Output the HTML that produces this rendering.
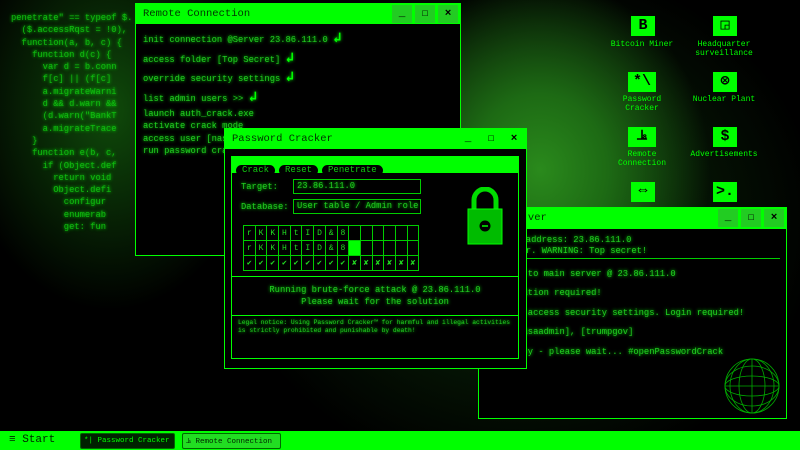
<!DOCTYPE html>
<html><head><style>
*{margin:0;padding:0;box-sizing:border-box}
body{width:800px;height:450px;overflow:hidden;background:#000;font-family:"Liberation Mono",monospace;color:#1d1;position:relative}
.bg{position:absolute;inset:0;background:
radial-gradient(ellipse 170px 190px at 540px 170px,#2a8a1c 0%,#1d6a14 40%,rgba(0,0,0,0) 100%),
radial-gradient(ellipse 150px 200px at 110px 110px,#0f4a0a 0%,rgba(0,0,0,0) 100%),
radial-gradient(ellipse 300px 260px at 520px 220px,#0c300a 0%,#000 100%);}
.code{position:absolute;left:11px;top:12px;font-size:8.8px;line-height:12.3px;color:#1b1;white-space:pre;text-shadow:0 0 3px #0f0}
.win{position:absolute;background:#000;border:1px solid #0f0}
.tb{background:#0f0;color:#030;height:20px;font-size:10.5px;padding:4px 7px;position:relative}
.btns{position:absolute;right:2px;top:1px;display:flex;gap:3px}
.btns span{width:20px;height:18px;background:#2c2;color:#000;font-size:11px;text-align:center;line-height:18px;font-weight:bold}
.t{font-size:8.8px;color:#2c2;text-shadow:0 0 3px #0f0;white-space:pre}
.ic{position:absolute;width:24px;height:20px;background:#0f0;color:#000;font-weight:bold;text-align:center;font-size:15px;line-height:20px}
.il{position:absolute;font-size:8px;color:#0f0;text-align:center;width:90px;line-height:9px}
.grid td{width:11.7px;height:15px;border:1px solid #0c0;font-size:8px;text-align:center;color:#2d2}
.grid{border-collapse:collapse;position:absolute}
.pill{display:inline-block;background:#000;color:#1c1;border-radius:6px;font-size:9px;padding:0 6px;height:11px;line-height:11px;margin-left:4px}
.ar{color:#0f0;font-size:14px;font-weight:bold}
</style></head><body>
<div class="bg"></div>
<div class="code">penetrate" == typeof $.
  ($.accessRqst = !0),
  function(a, b, c) {
    function d(c) {
      var d = b.conn
      f[c] || (f[c]
      a.migrateWarni
      d &amp;&amp; d.warn &amp;&amp;
      (d.warn("BankT
      a.migrateTrace
    }
    function e(b, c,
      if (Object.def
        return void
        Object.defi
          configur
          enumerab
          get: fun</div>

<div class="ic" style="left:631px;top:16px">B</div><div class="il" style="left:597px;top:40px">Bitcoin Miner</div>
<div class="ic" style="left:713px;top:16px">◲</div><div class="il" style="left:679px;top:40px">Headquarter<br>surveillance</div>
<div class="ic" style="left:628px;top:72px;width:28px">*\</div><div class="il" style="left:597px;top:95px">Password<br>Cracker</div>
<div class="ic" style="left:713px;top:72px">⊗</div><div class="il" style="left:679px;top:95px">Nuclear Plant</div>
<div class="ic" style="left:628px;top:127px;width:28px">⫡</div><div class="il" style="left:597px;top:150px">Remote<br>Connection</div>
<div class="ic" style="left:713px;top:127px">$</div><div class="il" style="left:679px;top:150px">Advertisements</div>
<div class="ic" style="left:631px;top:182px">⇔</div>
<div class="ic" style="left:713px;top:182px">&gt;.</div>

<div class="win" style="left:135px;top:3px;width:326px;height:253px">
<div class="tb">Remote Connection<div class="btns"><span>_</span><span>☐</span><span>×</span></div></div>
<div style="position:absolute;left:7px;top:26px;line-height:18.7px" class="t">init connection @Server 23.86.111.0 <span class="ar">↲</span>
access folder [Top Secret] <span class="ar">↲</span>
override security settings <span class="ar">↲</span>
list admin users &gt;&gt; <span class="ar">↲</span></div>
<div style="position:absolute;left:7px;top:104px;line-height:12.4px" class="t">launch auth_crack.exe
activate crack mode
access user [nasa
run password cra</div>
</div>

<div class="win" style="left:478px;top:207px;width:309px;height:212px">
<div class="tb" style="height:21px;padding-left:30px">Server<div class="btns"><span>_</span><span>☐</span><span>×</span></div></div>
<div class="t" style="position:absolute;left:-6px;top:27px;line-height:11px">Server IP address: 23.86.111.0
Main server. WARNING: Top secret!</div>
<div style="position:absolute;left:0;right:6px;top:50px;border-top:1px solid #0c0"></div>
<div class="t" style="position:absolute;left:-4px;top:57px;line-height:19.4px">Connected to main server @ 23.86.111.0
Authentication required!
Trying to access security settings. Login required!
Users: [nasaadmin], [trumpgov]
Server busy - please wait... #openPasswordCrack</div>
<svg style="position:absolute;left:245px;top:150px" width="56" height="56" viewBox="0 0 56 56"><g fill="none" stroke="#0a0" stroke-width=".8"><circle cx="28" cy="28" r="27"/><ellipse cx="28" cy="28" rx="13" ry="27"/><ellipse cx="28" cy="28" rx="22" ry="27"/><ellipse cx="28" cy="28" rx="27" ry="10"/><ellipse cx="28" cy="28" rx="27" ry="20"/><line x1="1" y1="28" x2="55" y2="28"/><line x1="28" y1="1" x2="28" y2="55"/></g></svg>
</div>

<div class="win" style="left:224px;top:128px;width:303px;height:241px;border-color:#0f0">
<div class="tb">Password Cracker<div class="btns"><span style="background:#0f0">_</span><span style="background:#0f0">☐</span><span style="background:#0f0">×</span></div></div>
<div style="position:absolute;left:6px;top:27px;width:288px;height:203px;border:1px solid #0f0">
<div style="background:#0f0;height:16px;padding-top:2px"><span class="pill">Crack</span><span class="pill">Reset</span><span class="pill">Penetrate</span></div>
<div class="t" style="position:absolute;left:9px;top:25px">Target:</div>
<div class="t" style="position:absolute;left:61px;top:22px;width:128px;height:15px;border:1px solid #0c0;padding:1px 3px">23.86.111.0</div>
<div class="t" style="position:absolute;left:9px;top:45px">Database:</div>
<div class="t" style="position:absolute;left:61px;top:42px;width:128px;height:15px;border:1px solid #0c0;padding:1px 3px;overflow:hidden">User table / Admin role</div>
<svg style="position:absolute;left:235px;top:30px" width="36" height="58" viewBox="0 0 36 58"><path d="M7 22V13a11 11 0 0 1 22 0v9" fill="none" stroke="#0d0" stroke-width="5"/><rect x="1" y="22" width="34" height="35" fill="#0b0" stroke="#0f0"/><circle cx="18" cy="39" r="5.5" fill="#000"/><rect x="15" y="38" width="6" height="2" fill="#0b0"/></svg>
<table class="grid" style="left:11px;top:68px">
<tr><td>r</td><td>K</td><td>K</td><td>H</td><td>t</td><td>I</td><td>D</td><td>&amp;</td><td>8</td><td></td><td></td><td></td><td></td><td></td><td></td></tr>
<tr><td>r</td><td>K</td><td>K</td><td>H</td><td>t</td><td>I</td><td>D</td><td>&amp;</td><td>8</td><td style="background:#0f0"></td><td></td><td></td><td></td><td></td><td></td></tr>
<tr style="font-weight:bold"><td>✔</td><td>✔</td><td>✔</td><td>✔</td><td>✔</td><td>✔</td><td>✔</td><td>✔</td><td>✔</td><td>✘</td><td>✘</td><td>✘</td><td>✘</td><td>✘</td><td>✘</td></tr></table>
<div style="position:absolute;left:0;right:0;top:119px;border-top:1px solid #0f0"></div>
<div class="t" style="position:absolute;left:0;right:0;top:127px;text-align:center;line-height:12px">Running brute-force attack @ 23.86.111.0
Please wait for the solution</div>
<div style="position:absolute;left:0;right:0;top:158px;border-top:1px solid #0f0"></div>
<div class="t" style="position:absolute;left:6px;top:162px;font-size:6.3px;line-height:7.5px">Legal notice: Using Password Cracker™ for harmful and illegal activities
is strictly prohibited and punishable by death!</div>
</div></div>

<div style="position:absolute;left:0;top:431px;width:800px;height:19px;background:#0f0">
<div style="position:absolute;left:9px;top:3px;font-size:11px;line-height:13px;color:#020">≡ Start</div>
<div style="position:absolute;left:80px;top:2px;width:95px;height:16px;background:#020;border:1px solid #060;border-radius:2px;color:#0f0;font-size:7.5px;padding:3px 3px;white-space:nowrap">*| Password Cracker</div>
<div style="position:absolute;left:182px;top:2px;width:99px;height:16px;background:#2d2;border:1px solid #060;border-radius:2px;color:#020;font-size:7.5px;padding:3px 3px;white-space:nowrap">⫡ Remote Connection</div>
</div>
</body></html>
